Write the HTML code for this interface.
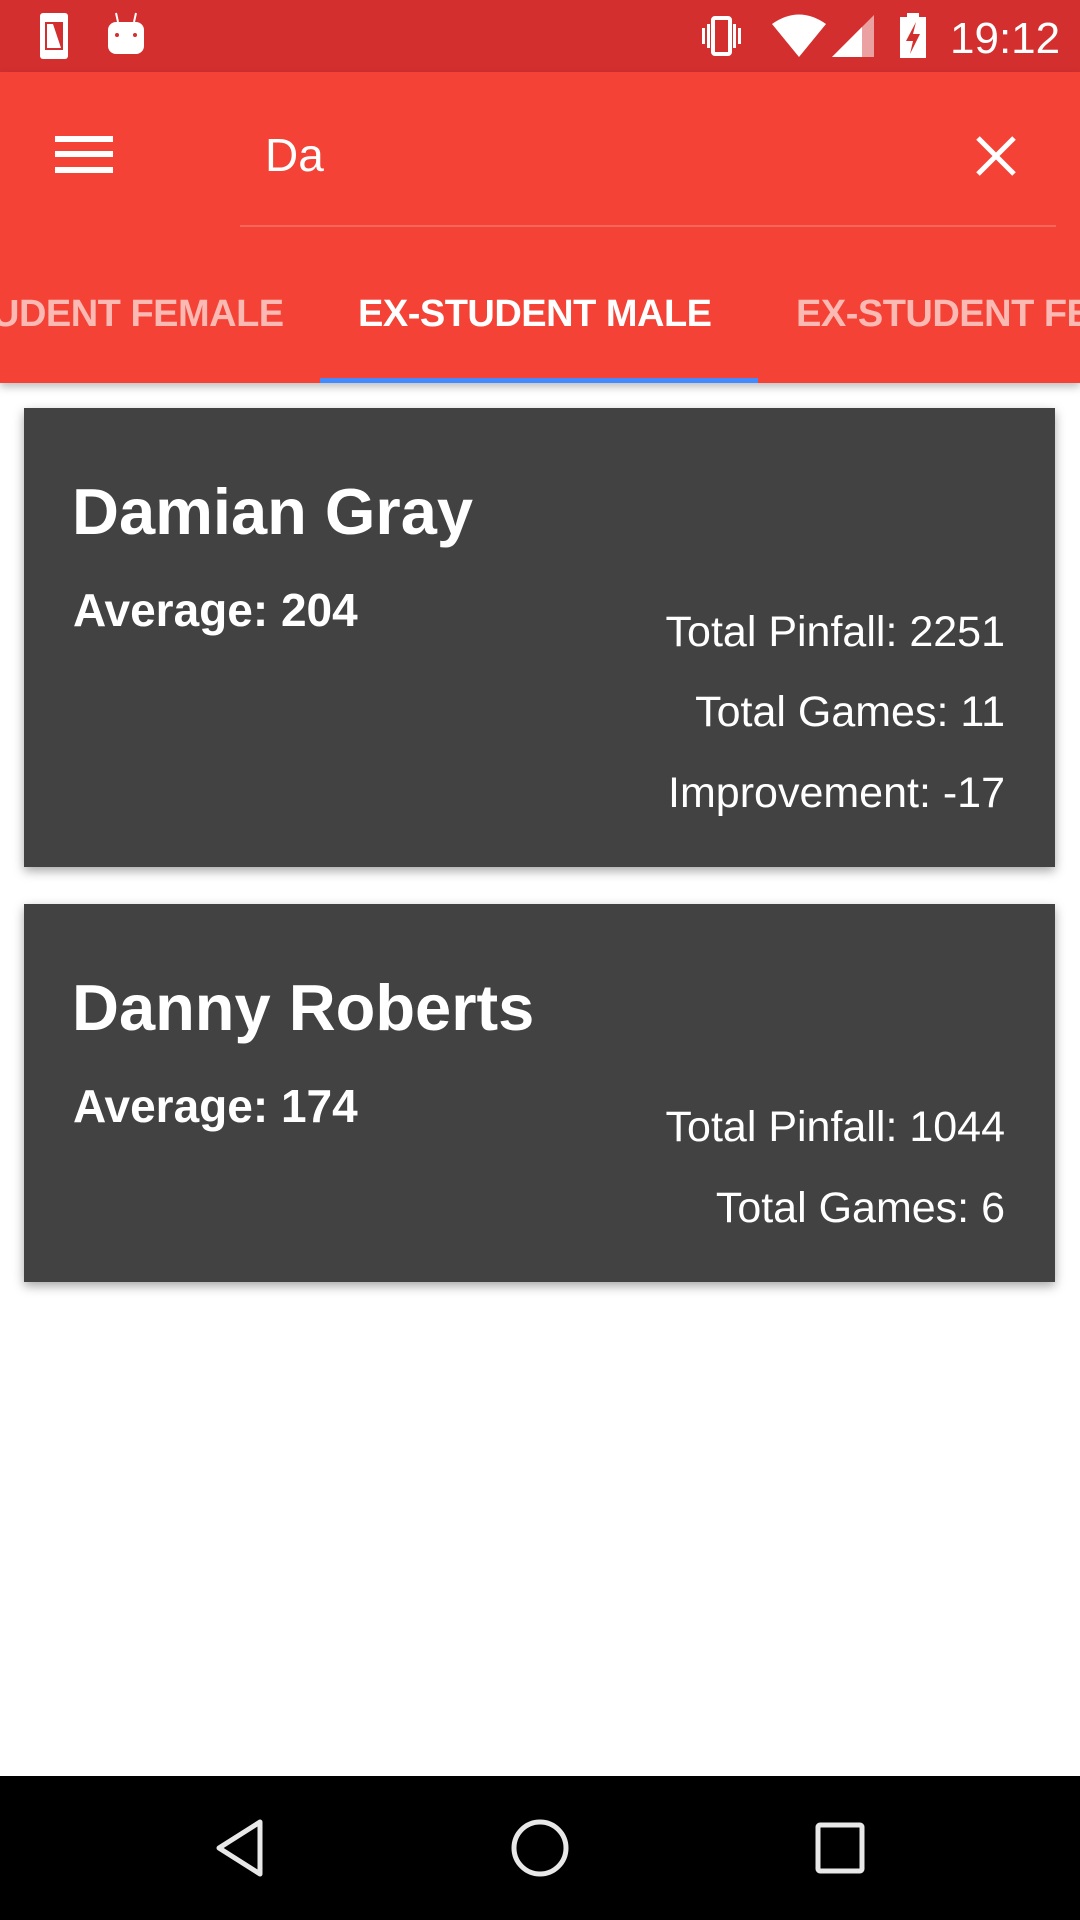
<!DOCTYPE html>
<html><head><meta charset="utf-8"><style>
*{margin:0;padding:0;box-sizing:border-box}
body{width:1080px;height:1920px;position:relative;background:#fff;font-family:"Liberation Sans",sans-serif;overflow:hidden}
.a{position:absolute;white-space:nowrap;line-height:1}
.card{position:absolute;left:24px;width:1031px;background:#424242;box-shadow:0 4px 10px rgba(0,0,0,.35)}
.w{color:#fff}
.r{right:75px;text-align:right;font-size:43px;color:#fff}
.tab{top:295px;font-size:38px;font-weight:bold;letter-spacing:-0.5px}
</style></head><body>
<div class="a" style="left:0;top:0;width:1080px;height:72px;background:#d32f2f"></div>
<div class="a" style="left:0;top:72px;width:1080px;height:311px;background:#f44336;box-shadow:0 4px 8px rgba(0,0,0,.25)"></div>
<svg class="a" style="left:0;top:0" width="1080" height="72">
<rect x="40" y="13" width="28" height="46" rx="3" fill="#fff"/><rect x="45" y="22" width="18" height="28" fill="#d32f2f"/><polygon points="47,24 53,24 61,48 47,48" fill="#fff"/>
<rect x="108" y="22" width="36" height="32" rx="8" fill="#fff"/><line x1="116" y1="13" x2="118" y2="22" stroke="#fff" stroke-width="2"/><line x1="136" y1="13" x2="134" y2="22" stroke="#fff" stroke-width="2"/><circle cx="117" cy="35" r="2" fill="#d32f2f"/><circle cx="135" cy="35" r="2" fill="#d32f2f"/>
<rect x="713" y="18" width="17" height="36" rx="2" fill="none" stroke="#fff" stroke-width="4"/><rect x="702" y="28" width="3" height="16" fill="#fff"/><rect x="738" y="28" width="3" height="16" fill="#fff"/><rect x="707" y="24" width="3" height="24" fill="#fff"/><rect x="733" y="24" width="3" height="24" fill="#fff"/>
<path d="M772 24 Q799 5 826 24 L799 57 Z" fill="#fff"/>
<polygon points="832,57 874,15 874,57" fill="#fff" opacity=".55"/><polygon points="832,57 862,27 862,57" fill="#fff"/>
<rect x="900" y="17" width="26" height="41" fill="#fff"/><rect x="907" y="13" width="12" height="5" fill="#fff"/><polygon points="916,22 906,41 913,41 910,54 920,34 913,34" fill="#d32f2f"/>
</svg>
<div class="a w" style="left:950px;top:17px;font-size:44px">19:12</div>
<div class="a" style="left:55px;top:136px;width:58px;height:6px;background:#fff"></div>
<div class="a" style="left:55px;top:151px;width:58px;height:6px;background:#fff"></div>
<div class="a" style="left:55px;top:167px;width:58px;height:6px;background:#fff"></div>
<div class="a w" style="left:265px;top:132px;font-size:46px">Da</div>
<svg class="a" style="left:970px;top:130px" width="52" height="52"><path d="M8 8 L44 44 M44 8 L8 44" stroke="#fff" stroke-width="5"/></svg>
<div class="a" style="left:240px;top:225px;width:816px;height:2px;background:#f6665b"></div>
<div class="a" style="left:0;top:0;width:1080px;height:383px;overflow:hidden">
<div class="a tab" style="left:-8px;color:#fbb9b3">UDENT FEMALE</div>
<div class="a tab w" style="left:358px">EX-STUDENT MALE</div>
<div class="a tab" style="left:796px;color:#fbb9b3">EX-STUDENT FEMALE</div>
</div>
<div class="a" style="left:320px;top:378px;width:438px;height:5px;background:#448aff"></div>
<div class="card" style="top:408px;height:459px"></div>
<div class="a w" style="left:72px;top:479px;font-size:65px;font-weight:bold">Damian Gray</div>
<div class="a w" style="left:73px;top:587px;font-size:46px;font-weight:bold">Average: 204</div>
<div class="a r" style="top:611px">Total Pinfall: 2251</div>
<div class="a r" style="top:691px">Total Games: 11</div>
<div class="a r" style="top:772px">Improvement: -17</div>
<div class="card" style="top:904px;height:378px"></div>
<div class="a w" style="left:72px;top:975px;font-size:65px;font-weight:bold">Danny Roberts</div>
<div class="a w" style="left:73px;top:1083px;font-size:46px;font-weight:bold">Average: 174</div>
<div class="a r" style="top:1106px">Total Pinfall: 1044</div>
<div class="a r" style="top:1187px">Total Games: 6</div>
<div class="a" style="left:0;top:1776px;width:1080px;height:144px;background:#000"></div>
<svg class="a" style="left:0;top:1776px" width="1080" height="144">
<path d="M260 46 L219 72 L260 98 Z" fill="none" stroke="#e8e8e8" stroke-width="5" stroke-linejoin="round"/>
<circle cx="540" cy="72" r="26" fill="none" stroke="#e8e8e8" stroke-width="5"/>
<rect x="818" y="49" width="44" height="46" rx="2" fill="none" stroke="#e8e8e8" stroke-width="5"/>
</svg>
</body></html>
